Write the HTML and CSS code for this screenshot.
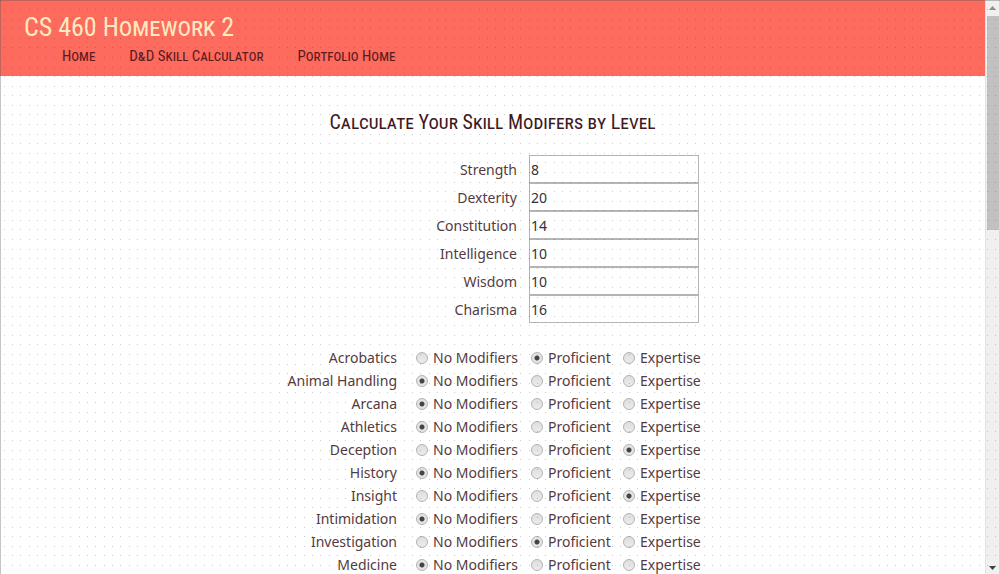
FILE: index.html
```html
<!DOCTYPE html>
<html lang="en">
<head>
<meta charset="utf-8">
<title>CS 460 Homework 2</title>
<link rel="stylesheet" href="styles.css">
</head>
<body>
<div class="page">
  <header class="site-header">
    <h1 class="site-title">CS 460 Homework 2</h1>
    <nav class="site-nav">
      <a href="#home">Home</a>
      <a href="#skills">D&amp;D Skill Calculator</a>
      <a href="#portfolio">Portfolio Home</a>
    </nav>
  </header>
  <main class="content">
    <h2 class="form-title">Calculate Your Skill Modifers by Level</h2>
    <form class="calculator">
      <div class="abilities" id="abilities"></div>
      <div class="skills" id="skills"></div>
    </form>
  </main>
</div>
<div class="scrollbar" aria-hidden="true">
  <div class="arrow"><svg width="7" height="4" viewBox="0 0 7 4"><path d="M0 4L3.5 0L7 4Z" fill="#8f8f8f"/></svg></div>
  <div class="thumb"></div>
  <div class="arrow arrow-down"><svg width="7" height="4" viewBox="0 0 7 4"><path d="M0 0L3.5 4L7 0Z" fill="#404040"/></svg></div>
</div>
<svg class="dots" width="100%" height="100%" aria-hidden="true">
  <defs>
    <pattern id="dot-grid" x="12" y="9" width="25" height="115" patternUnits="userSpaceOnUse">
      <g id="dot-rows"></g>
    </pattern>
  </defs>
  <rect width="100%" height="100%" fill="url(#dot-grid)"/>
  <rect width="100%" height="1" fill="#555" fill-opacity="0.35"/>
  <rect width="1" height="100%" fill="#555" fill-opacity="0.35"/>
</svg>
<script src="script.js"></script>
</body>
</html>
```
FILE: styles.css
```css
* {
  box-sizing: border-box;
}

body {
  margin: 0;
  height: 100vh;
  display: flex;
  overflow: hidden;
  background: #fff;
  color: #553b40;
  font: 14px/23px "Noto Sans", "Open Sans", sans-serif;
}

.page {
  flex: 1;
  min-width: 0;
  overflow: hidden;
}

.site-header {
  padding: 10px 24px 8px;
  background: #fc6b5d;
}

.site-title,
.form-title,
.site-nav {
  font-family: "Roboto Condensed", Lato, sans-serif;
  font-variant: small-caps;
  font-weight: 400;
  margin: 0;
}

.site-title {
  color: #ffe9c0;
  font-size: 26px;
  line-height: 34px;
}

.site-nav {
  display: flex;
  gap: 34px;
  padding-left: 38px;
  font-size: 15px;
  line-height: 24px;
}

.site-nav a {
  color: #5b1a1d;
  text-decoration: none;
}

.form-title {
  margin: 31px 0 17px;
  color: #40191f;
  font-size: 20px;
  line-height: 31px;
  text-align: center;
}

.calculator {
  width: 413px;
  margin: 0 auto;
}

.abilities {
  margin-bottom: 23px;
}

.ability {
  display: flex;
  justify-content: flex-end;
  align-items: center;
  gap: 12px;
}

.ability input {
  width: 170px;
  height: 28px;
  padding: 0 1px;
  border: 1px solid #b4b4b4;
  border-radius: 0;
  background: #fff;
  color: #333;
  font: inherit;
}

.skill {
  display: grid;
  grid-template-columns: 130px 115px 92px 76px;
}

.skill-name {
  padding-right: 19px;
  text-align: right;
  white-space: nowrap;
}

.option {
  display: flex;
  align-items: center;
  gap: 5px;
  white-space: nowrap;
}

.option input {
  appearance: none;
  flex: none;
  width: 12px;
  height: 12px;
  margin: 0;
  border: 1px solid #b3b3b3;
  border-radius: 50%;
  background: linear-gradient(#dedede, #ececec);
}

.option input:checked {
  background: radial-gradient(circle, #444 2px, #e4e4e4 3px);
}

.scrollbar {
  width: 15px;
  display: flex;
  flex-direction: column;
  background: #f0f0f0;
  border-left: 1px solid #e2e2e2;
  border-right: 1px solid #d8d8d8;
}

.arrow {
  height: 16px;
  display: flex;
  align-items: center;
  justify-content: center;
}

.thumb {
  height: 214px;
  margin-left: 1px;
  background: #c1c1c1;
}

.arrow-down {
  height: 12px;
  margin-top: auto;
}

.dots {
  position: absolute;
  top: 0;
  left: 0;
  pointer-events: none;
}
```
FILE: script.js
```js
const abilities = { Strength: 8, Dexterity: 20, Constitution: 14, Intelligence: 10, Wisdom: 10, Charisma: 16 };
const levels = ["No Modifiers", "Proficient", "Expertise"];
const skills = [
  ["Acrobatics", 1], ["Animal Handling", 0], ["Arcana", 0], ["Athletics", 0], ["Deception", 2],
  ["History", 0], ["Insight", 2], ["Intimidation", 0], ["Investigation", 1], ["Medicine", 0]
];

document.getElementById("abilities").innerHTML = Object.entries(abilities).map(([name, value]) =>
  `<div class="ability"><label for="${name}">${name}</label><input type="text" id="${name}" value="${value}"></div>`
).join("");

document.getElementById("skills").innerHTML = skills.map(([name, chosen], row) =>
  `<div class="skill" role="radiogroup" aria-labelledby="skill-${row}"><span class="skill-name" id="skill-${row}">${name}</span>` +
  levels.map((level, i) =>
    `<label class="option"><input type="radio" name="level-${row}"${i === chosen ? " checked" : ""}>${level}</label>`
  ).join("") + "</div>"
).join("");

// Twelve rows of three dots fill one tile of the pattern.
let dots = "";
for (let row = 0; row < 12; row++) {
  for (const x of [0, 8, 17]) {
    dots += `<rect x="${x}" y="${Math.round(row * 115 / 12)}" width="1" height="1" fill="#000" fill-opacity="0.2"/>`;
  }
}
document.getElementById("dot-rows").innerHTML = dots;
```
